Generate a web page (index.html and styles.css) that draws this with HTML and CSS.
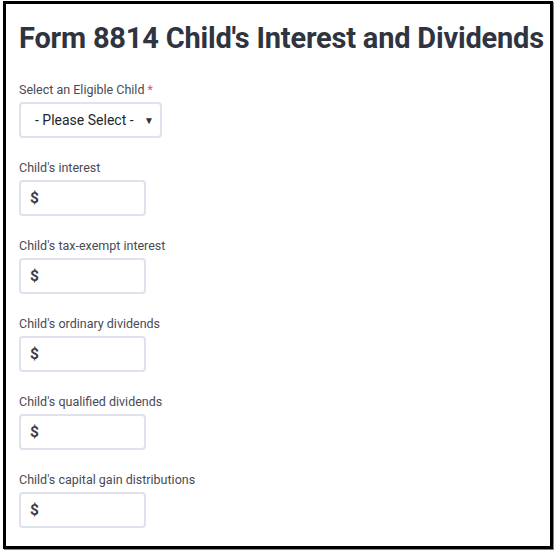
FILE: index.html
```html
<!DOCTYPE html>
<html>
<head>
<meta charset="utf-8">
<link rel="stylesheet" href="styles.css">
</head>
<body>
<div class="frame">
  <h1 class="title">Form 8814 Child's Interest and Dividends</h1>
  <div class="field">
    <label class="label">Select an Eligible Child <span class="req">*</span></label>
    <div class="select">
      <span>- Please Select -</span>
      <span class="arrow">&#9660;</span>
    </div>
  </div>
  <div class="field">
    <label class="label">Child's interest</label>
    <div class="input"><span class="dollar">$</span></div>
  </div>
  <div class="field">
    <label class="label">Child's tax-exempt interest</label>
    <div class="input"><span class="dollar">$</span></div>
  </div>
  <div class="field">
    <label class="label">Child's ordinary dividends</label>
    <div class="input"><span class="dollar">$</span></div>
  </div>
  <div class="field">
    <label class="label">Child's qualified dividends</label>
    <div class="input"><span class="dollar">$</span></div>
  </div>
  <div class="field">
    <label class="label">Child's capital gain distributions</label>
    <div class="input"><span class="dollar">$</span></div>
  </div>
</div>
</body>
</html>
```
FILE: styles.css
```css
html, body {
  margin: 0;
  padding: 0;
  background: #ffffff;
}
body {
  font-family: Roboto, "Liberation Sans", sans-serif;
  width: 555px;
  height: 552px;
  overflow: hidden;
}
.frame {
  box-sizing: border-box;
  margin: 1px 0 0 3px;
  width: 550px;
  height: 548px;
  border: 3px solid #000;
  box-shadow: 1px 1px 0 #888;
  padding: 0 0 0 13px;
  overflow: hidden;
}
.title {
  margin: 17px 0 27px 0;
  font-size: 29px;
  font-weight: 700;
  color: #2f3440;
  line-height: 34px;
  letter-spacing: -0.2px;
  white-space: nowrap;
}
.field {
  display: flex;
  flex-direction: column;
  align-items: flex-start;
  margin-bottom: 22px;
}
.label {
  font-size: 12.5px;
  color: #4a4a55;
  line-height: 16px;
  margin-bottom: 4px;
}
.req {
  color: #e0556a;
}
.select {
  box-sizing: border-box;
  width: 143px;
  height: 36px;
  border: 2px solid #dfe1ec;
  border-radius: 4px;
  display: flex;
  align-items: center;
  justify-content: space-between;
  padding: 0 6px 0 14px;
  font-size: 14px;
  color: #25262b;
}
.arrow {
  font-size: 10px;
  color: #333;
}
.input {
  box-sizing: border-box;
  width: 127px;
  height: 36px;
  border: 2px solid #dfe1ec;
  border-radius: 4px;
  display: flex;
  align-items: center;
  padding-left: 9px;
}
.dollar {
  font-size: 15.5px;
  font-weight: 700;
  color: #3a3d46;
}
```
